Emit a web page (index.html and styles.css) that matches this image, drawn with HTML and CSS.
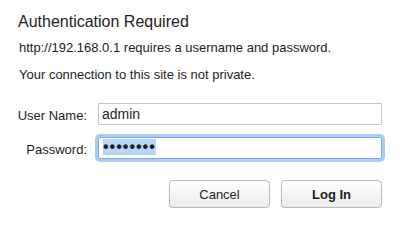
FILE: index.html
```html
<!DOCTYPE html>
<html lang="en">
<head>
    <meta charset="UTF-8">
    <title>Authentication Required</title>
    <link rel="stylesheet" href="styles.css">
</head>
<body>
    <div class="dialog">
        <h1>Authentication Required</h1>
        <p class="host">http://192.168.0.1 requires a username and password.</p>
        <p class="warning">Your connection to this site is not private.</p>

        <div class="form">
            <label class="label">User Name:</label>
            <div class="field">admin</div>
            <label class="label">Password:</label>
            <div class="field focused"><span class="selected">••••••••</span></div>
        </div>

        <div class="buttons">
            <button class="btn">Cancel</button>
            <button class="btn primary">Log In</button>
        </div>
    </div>
</body>
</html>
```

FILE: styles.css
```css
body {
    margin: 0;
    background: #ffffff;
    font-family: "Liberation Sans", Arial, sans-serif;
    color: #1e1e1e;
}
.dialog {
    padding: 12px 18px 0 18px;
    width: 364px;
}
h1 {
    margin: 0;
    font-size: 16px;
    line-height: 20px;
    font-weight: normal;
}
.host {
    margin: 8px 0 0 1px;
    font-size: 13px;
    line-height: 16px;
}
.warning {
    margin: 11px 0 0 1px;
    font-size: 13px;
    line-height: 16px;
}
.form {
    display: grid;
    grid-template-columns: 70px 284px;
    column-gap: 11px;
    row-gap: 12px;
    align-items: center;
    margin: 20px 0 0 -1px;
}
.label {
    font-size: 13px;
    text-align: right;
    padding-top: 2px;
}
.field {
    box-sizing: border-box;
    height: 22px;
    border: 1px solid #c9c9c9;
    padding: 0 3px;
    font-size: 14px;
    line-height: 20px;
}
.field.focused {
    border-color: #7ea9e6;
    border-radius: 2px;
    box-shadow: 0 0 0 3px #a9cbf6;
}
.selected {
    display: inline-block;
    margin-left: 1px;
    background: #b6d6fb;
    font-size: 16px;
    font-weight: bold;
    letter-spacing: 1px;
    line-height: 16px;
    vertical-align: 1px;
}
.buttons {
    display: flex;
    justify-content: flex-end;
    gap: 11px;
    margin-top: 21px;
}
.btn {
    width: 101px;
    height: 28px;
    border: 1px solid #b9b9b9;
    border-radius: 4px;
    background: linear-gradient(#ffffff, #ececec);
    box-shadow: 0 1px 1px rgba(0,0,0,0.08);
    font-family: "Liberation Sans", Arial, sans-serif;
    font-size: 13px;
    color: #1e1e1e;
    padding: 0;
}
.btn.primary {
    font-weight: bold;
}
```
